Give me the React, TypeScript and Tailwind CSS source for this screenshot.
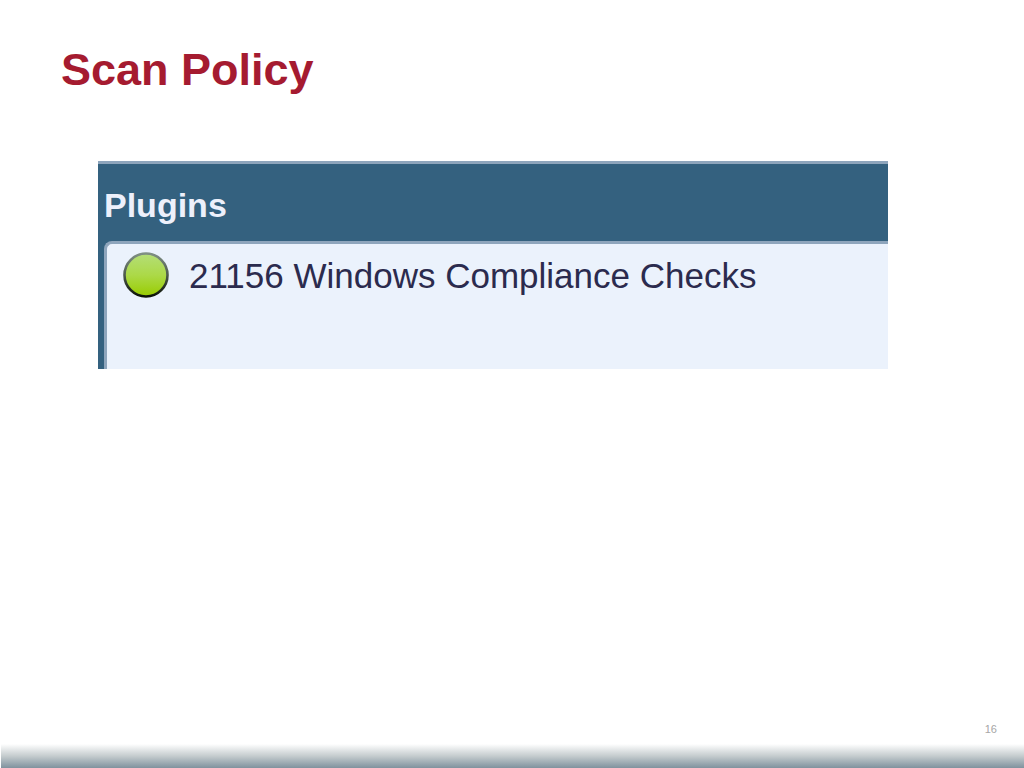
type Plugin = { id: number; name: string };

const plugins: Plugin[] = [{ id: 21156, name: "Windows Compliance Checks" }];

function StatusDot() {
  return (
    <svg viewBox="0 0 46 46" className="size-[46px] shrink-0" role="img" aria-label="Enabled">
      <defs>
        <linearGradient id="dot-fill" x1="0" y1="0" x2="0" y2="1">
          <stop offset="0" stopColor="#b4de78" />
          <stop offset="0.5" stopColor="#acd948" />
          <stop offset="1" stopColor="#98cc00" />
        </linearGradient>
        <linearGradient id="dot-ring" x1="0" y1="0" x2="0" y2="1">
          <stop offset="0" stopColor="#7f8f84" />
          <stop offset="0.5" stopColor="#4d5a4c" />
          <stop offset="1" stopColor="#0c1206" />
        </linearGradient>
      </defs>
      <circle cx="23" cy="23" r="21.5" fill="url(#dot-fill)" stroke="url(#dot-ring)" strokeWidth="2.6" />
    </svg>
  );
}

function PluginPanel() {
  return (
    <section
      aria-labelledby="plugins-heading"
      className="border-t-[3px] border-[#8ea5bc] bg-[#34617f] pl-1.5"
    >
      <h2
        id="plugins-heading"
        className="pt-[21px] pb-4 text-[34px] leading-10 font-bold text-[#edf0fb]"
      >
        Plugins
      </h2>
      <ul className="min-h-32 rounded-tl-lg border-t-[3px] border-l-[3px] border-[#8ea5bc] bg-[#ebf2fc] pt-2 pl-4">
        {plugins.map((plugin) => (
          <li key={plugin.id} className="flex items-start gap-5">
            <StatusDot />
            <span className="text-[35px] leading-[48px] text-[#2b2b4e]">
              {plugin.id} {plugin.name}
            </span>
          </li>
        ))}
      </ul>
    </section>
  );
}

export default function App() {
  return (
    <div className="flex min-h-screen flex-col bg-white font-['Liberation_Sans',Arial,sans-serif]">
      <header className="px-[61px] pt-11">
        <h1 className="text-[45px] leading-[52px] font-bold text-[#a51b30]">Scan Policy</h1>
      </header>
      <main className="grow pt-[65px] pr-[136px] pl-[98px]">
        <PluginPanel />
      </main>
      <footer>
        <p className="pr-[27px] pb-[7px] text-right text-[11px] leading-4 text-[#a6a6a6]">16</p>
        <div className="ml-px h-6 bg-linear-to-b from-white via-[#c5ccce] to-[#80929e]" />
      </footer>
    </div>
  );
}
